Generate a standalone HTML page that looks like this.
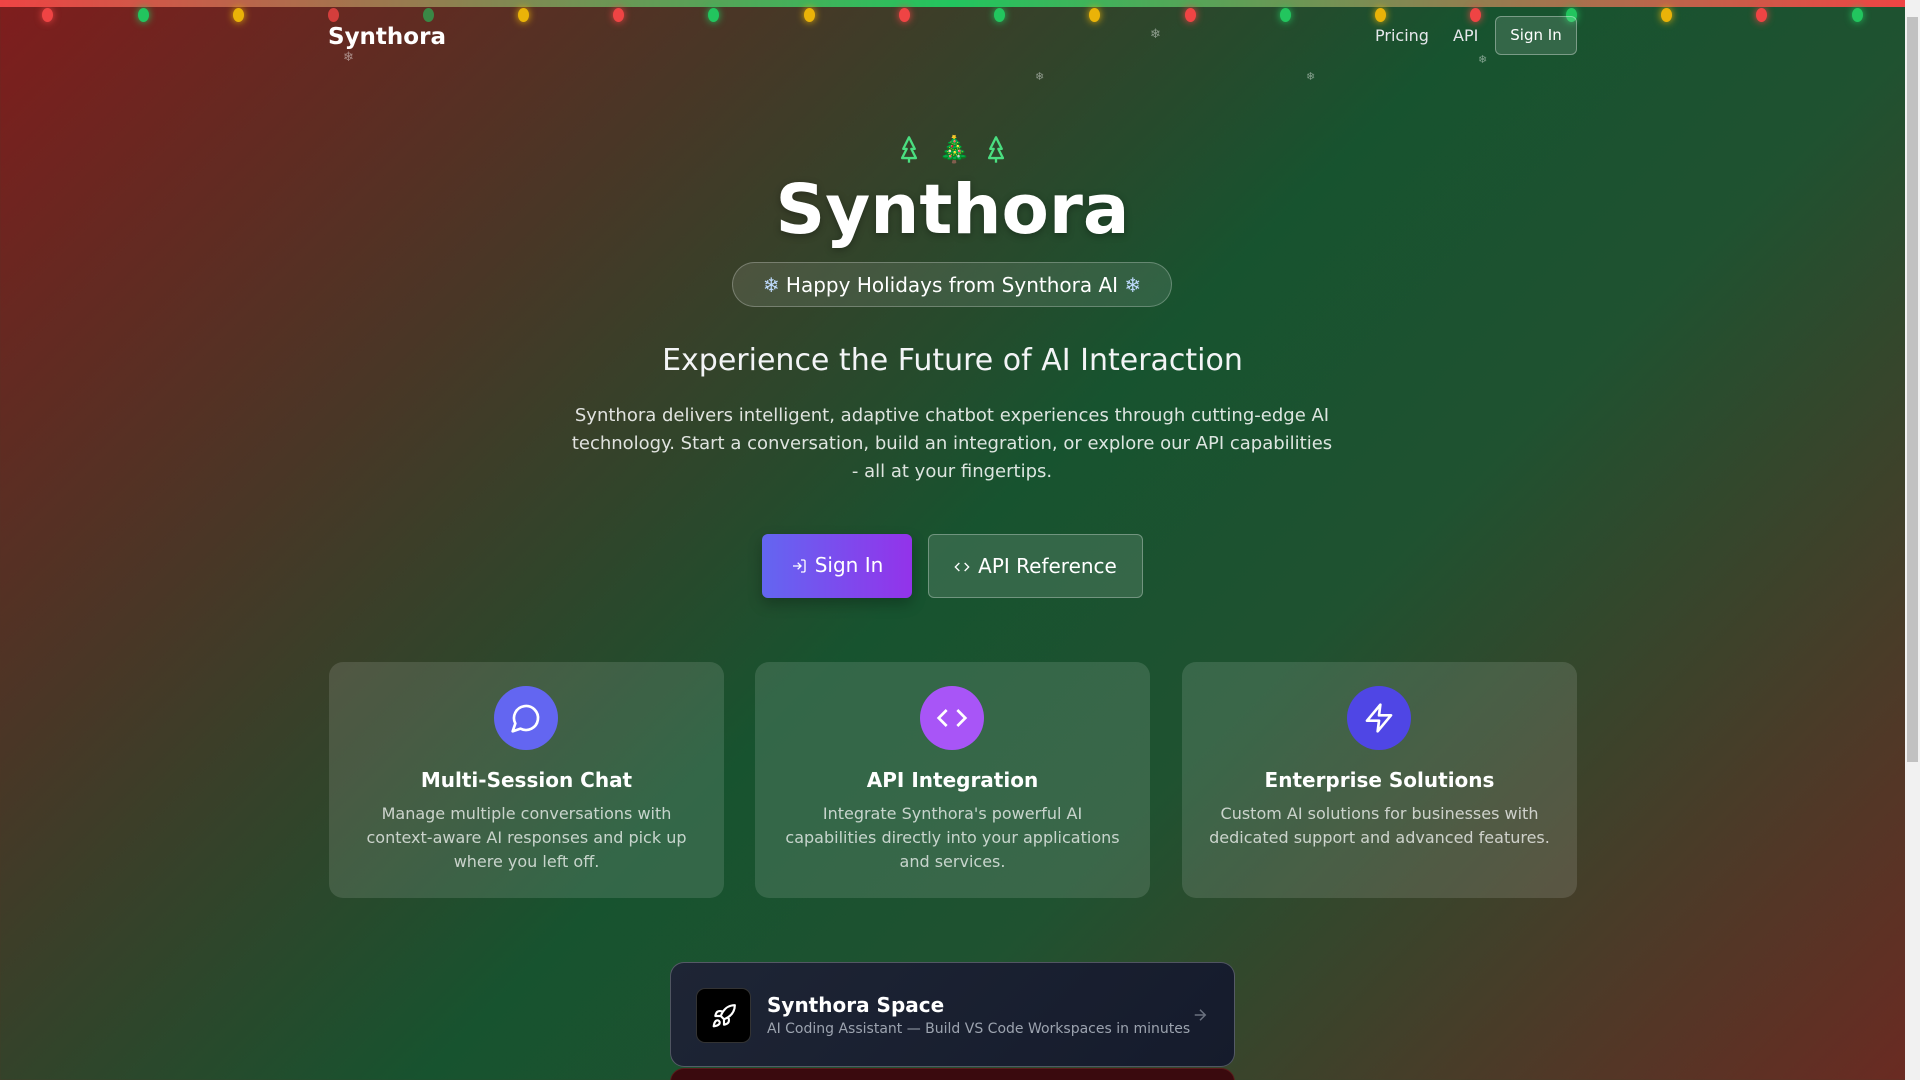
<!DOCTYPE html>
<html><head><meta charset="utf-8"><style>
*{box-sizing:border-box;margin:0;padding:0}
html,body{width:1920px;height:1080px;overflow:hidden}
body{font-family:"DejaVu Sans","Liberation Sans",sans-serif;color:#fff;position:relative;
background:linear-gradient(135deg,#7f1d1d 0%,#4a3626 25%,#17532f 50%,#1f5230 65%,#6b2a22 100%);}
.sb{position:absolute;right:0;top:0;width:15px;height:1080px;background:#f1f1f1}
.sb div{position:absolute;left:2px;top:17px;width:11px;height:745px;background:#c1c1c1}
.topbar{position:absolute;left:0;top:0;width:1905px;height:7px;background:linear-gradient(90deg,#ef4444,#22c55e 50%,#ef4444)}
.light{position:absolute;top:8px;width:11px;height:14px;border-radius:50%}
.abs{position:absolute}
.logo{left:328px;top:24px;font-size:23px;font-weight:bold}
.nav{top:26px;font-size:16px;color:#e5e7eb}
.nbtn{left:1495px;top:16px;width:82px;height:39px;border:1px solid rgba(255,255,255,.35);background:rgba(255,255,255,.12);border-radius:6px;font-size:15px;text-align:center;line-height:37px}
.c{position:absolute;left:0;width:1905px;text-align:center}
.badge{position:absolute;left:732px;top:262px;width:440px;height:45px;border-radius:23px;border:1px solid rgba(255,255,255,.25);background:rgba(255,255,255,.1);font-size:20px;line-height:44px;text-align:center}
.btn{position:absolute;top:534px;height:64px;border-radius:6px;font-size:20px;line-height:63px;text-align:center}
.card{position:absolute;top:662px;width:395px;height:236px;border-radius:14px;background:rgba(255,255,255,.12);text-align:center}
.ic{position:absolute;left:165px;top:24px;width:64px;height:64px;border-radius:50%}
.ic svg{margin-top:16px}
.card h3{position:absolute;top:106px;width:100%;font-size:20px;font-weight:bold}
.card p{position:absolute;top:140px;left:22px;right:22px;font-size:16px;line-height:24px;color:rgba(255,255,255,.72)}
.flake{position:absolute;color:rgba(255,255,255,.45);font-size:13px}
</style></head><body>
<div class="topbar"></div>
<div class="light" style="left:42px;background:#ef4444;box-shadow:0 0 8px #ef4444"></div>
<div class="light" style="left:138px;background:#22c55e;box-shadow:0 0 8px #22c55e"></div>
<div class="light" style="left:233px;background:#eab308;box-shadow:0 0 8px #eab308"></div>
<div class="light" style="left:328px;background:#ef4444;opacity:.8"></div>
<div class="light" style="left:423px;background:#22c55e;opacity:.6"></div>
<div class="light" style="left:518px;background:#eab308;box-shadow:0 0 8px #eab308"></div>
<div class="light" style="left:613px;background:#ef4444;box-shadow:0 0 8px #ef4444"></div>
<div class="light" style="left:708px;background:#22c55e;box-shadow:0 0 8px #22c55e"></div>
<div class="light" style="left:804px;background:#eab308;box-shadow:0 0 8px #eab308"></div>
<div class="light" style="left:899px;background:#ef4444;box-shadow:0 0 8px #ef4444"></div>
<div class="light" style="left:994px;background:#22c55e;box-shadow:0 0 8px #22c55e"></div>
<div class="light" style="left:1089px;background:#eab308;box-shadow:0 0 8px #eab308"></div>
<div class="light" style="left:1185px;background:#ef4444;box-shadow:0 0 8px #ef4444"></div>
<div class="light" style="left:1280px;background:#22c55e;box-shadow:0 0 8px #22c55e"></div>
<div class="light" style="left:1375px;background:#eab308;box-shadow:0 0 8px #eab308"></div>
<div class="light" style="left:1470px;background:#ef4444;box-shadow:0 0 8px #ef4444"></div>
<div class="light" style="left:1566px;background:#22c55e;box-shadow:0 0 8px #22c55e"></div>
<div class="light" style="left:1661px;background:#eab308;box-shadow:0 0 8px #eab308"></div>
<div class="light" style="left:1756px;background:#ef4444;box-shadow:0 0 8px #ef4444"></div>
<div class="light" style="left:1852px;background:#22c55e;box-shadow:0 0 8px #22c55e"></div>

<div class="flake" style="left:343px;top:50px">❄</div>
<div class="flake" style="left:1150px;top:27px">❄</div>
<div class="flake" style="left:1035px;top:70px;font-size:11px">❄</div>
<div class="flake" style="left:1306px;top:70px;font-size:11px">❄</div>
<div class="flake" style="left:1478px;top:53px;font-size:11px">❄</div>

<div class="abs logo">Synthora</div>
<div class="abs nav" style="left:1375px">Pricing</div>
<div class="abs nav" style="left:1453px">API</div>
<div class="abs nbtn">Sign In</div>

<svg style="position:absolute;left:895px;top:135px" width="28" height="30" viewBox="0 0 24 26" fill="none" stroke="#4ade80" stroke-width="2" stroke-linejoin="round"><path d="M12 2L7 12h3l-4 8h12l-4-8h3z"/><path d="M12 20v4"/></svg>
<div style="position:absolute;left:938px;top:134px;font-size:26px;line-height:32px">🎄</div>
<svg style="position:absolute;left:982px;top:135px" width="28" height="30" viewBox="0 0 24 26" fill="none" stroke="#4ade80" stroke-width="2" stroke-linejoin="round"><path d="M12 2L7 12h3l-4 8h12l-4-8h3z"/><path d="M12 20v4"/></svg>
<div class="c" style="top:168px;font-size:69px;font-weight:bold;line-height:84px;text-shadow:0 2px 8px rgba(0,0,0,.3)">Synthora</div>
<div class="badge"><span style="color:#bfdbfe">❄</span> Happy Holidays from Synthora AI <span style="color:#bfdbfe">❄</span></div>
<div class="c" style="top:342px;font-size:30px;line-height:38px;color:#f3f4f6">Experience the Future of AI Interaction</div>
<div style="position:absolute;left:568px;width:768px;top:402px;font-size:18px;line-height:28px;text-align:center;color:rgba(255,255,255,.85)">Synthora delivers intelligent, adaptive chatbot experiences through cutting-edge AI technology. Start a conversation, build an integration, or explore our API capabilities - all at your fingertips.</div>

<div class="btn" style="left:762px;width:150px;background:linear-gradient(90deg,#6366f1,#9333ea);box-shadow:0 6px 14px rgba(0,0,0,.25)"><svg width="16" height="16" viewBox="0 0 24 24" fill="none" stroke="#fff" stroke-width="2" style="vertical-align:-2px;margin-right:8px"><path d="M15 3h4a2 2 0 0 1 2 2v14a2 2 0 0 1-2 2h-4M10 17l5-5-5-5M15 12H3"/></svg>Sign In</div>
<div class="btn" style="left:928px;width:215px;border:1px solid rgba(255,255,255,.3);background:rgba(255,255,255,.12)"><svg width="16" height="16" viewBox="0 0 24 24" fill="none" stroke="#fff" stroke-width="2" style="vertical-align:-2px;margin-right:8px"><path d="M16 18l6-6-6-6M8 6l-6 6 6 6"/></svg>API Reference</div>

<div class="card" style="left:329px"><div class="ic" style="background:#6366f1"><svg width="32" height="32" viewBox="0 0 24 24" fill="none" stroke="#fff" stroke-width="2" stroke-linejoin="round"><path d="M7.9 20A9 9 0 1 0 4 16.1L2 22z"/></svg></div><h3>Multi-Session Chat</h3><p>Manage multiple conversations with context-aware AI responses and pick up where you left off.</p></div>
<div class="card" style="left:755px"><div class="ic" style="background:#a855f7"><svg width="32" height="32" viewBox="0 0 24 24" fill="none" stroke="#fff" stroke-width="2"><path d="M16 18l6-6-6-6M8 6l-6 6 6 6"/></svg></div><h3>API Integration</h3><p>Integrate Synthora's powerful AI capabilities directly into your applications and services.</p></div>
<div class="card" style="left:1182px"><div class="ic" style="background:#4f46e5"><svg width="32" height="32" viewBox="0 0 24 24" fill="none" stroke="#fff" stroke-width="2" stroke-linejoin="round"><path d="M13 2L3 14h9l-1 8 10-12h-9l1-8z"/></svg></div><h3>Enterprise Solutions</h3><p style="left:14px;right:14px">Custom AI solutions for businesses with dedicated support and advanced features.</p></div>

<div style="position:absolute;left:670px;top:962px;width:565px;height:105px;border-radius:14px;background:linear-gradient(135deg,#1e2535,#151b2c);border:1px solid rgba(255,255,255,.25)">
<div style="position:absolute;left:25px;top:25px;width:55px;height:55px;border-radius:9px;background:#000;border:1px solid #333"><svg width="26" height="26" viewBox="0 0 24 24" fill="none" stroke="#fff" stroke-width="2" stroke-linejoin="round" stroke-linecap="round" style="margin:14px"><path d="M4.5 16.5c-1.5 1.26-2 5-2 5s3.74-.5 5-2c.71-.84.7-2.13-.09-2.91a2.18 2.18 0 0 0-2.91-.09zM12 15l-3-3a22 22 0 0 1 2-3.95A12.88 12.88 0 0 1 22 2c0 2.72-.78 7.5-6 11a22.350 22.35 0 0 1-4 2zM9 12H4s.55-3.03 2-4c1.62-1.08 5 0 5 0M12 15v5s3.03-.55 4-2c1.08-1.62 0-5 0-5"/></svg></div>
<div style="position:absolute;left:96px;top:30px;font-size:20px;font-weight:bold">Synthora Space</div>
<div style="position:absolute;left:96px;top:58px;font-size:14px;color:#9ca3af">AI Coding Assistant — Build VS Code Workspaces in minutes</div>
<svg width="18" height="18" viewBox="0 0 24 24" fill="none" stroke="#6b7280" stroke-width="2" style="position:absolute;left:520px;top:43px"><path d="M5 12h14M12 5l7 7-7 7"/></svg>
</div>
<div style="position:absolute;left:670px;top:1068px;width:565px;height:40px;border-radius:14px;background:#3a0a0e;border:1px solid #5a1a1a"></div>
<div class="sb"><div></div></div>
</body></html>
